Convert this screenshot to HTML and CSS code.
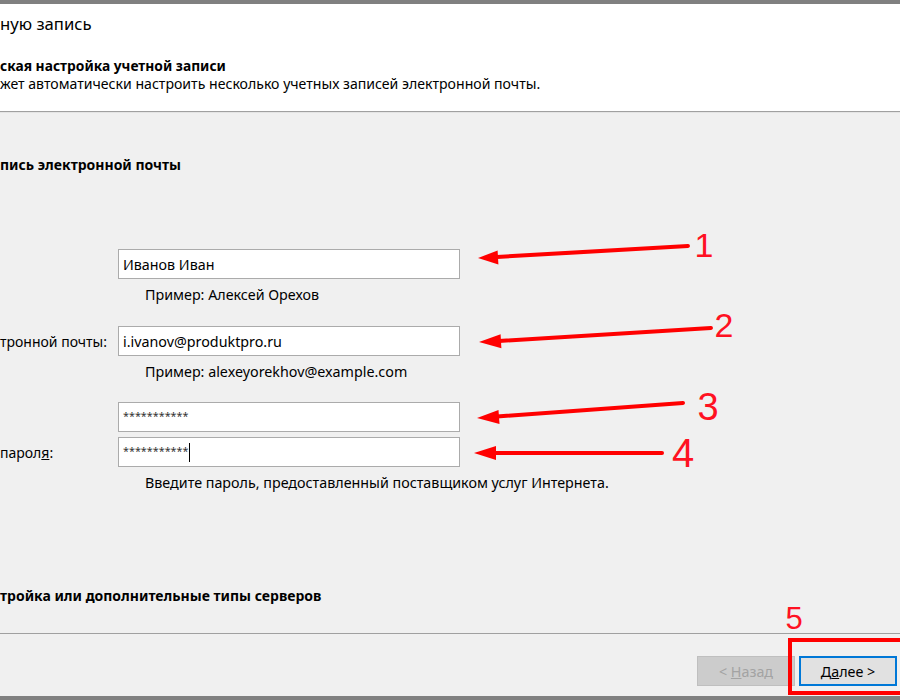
FILE: index.html
```html
<!DOCTYPE html>
<html lang="ru">

<head>
  <meta charset="UTF-8">
  <meta name="viewport" content="width=device-width, initial-scale=1">
  <title>Добавить учетную запись</title>
  <link rel="stylesheet" href="styles.css">
</head>

<body>
  <div class="topbar"></div>
  <div class="dialog">
    <div class="head">
      <div class="head-title">ную запись</div>
      <div class="head-section">ская настройка учетной записи</div>
      <div class="head-desc">жет автоматически настроить несколько учетных записей электронной почты.</div>
    </div>

    <div class="content">
      <div class="group-title">пись электронной почты</div>

      <div class="form">
        <div class="form-row">
          <label class="form-label" for="name"></label>
          <div class="field" id="name">Иванов Иван</div>
        </div>
        <div class="hint">Пример: Алексей Орехов</div>

        <div class="form-row form-row--email">
          <label class="form-label" for="email">тронной почты:</label>
          <div class="field" id="email">i.ivanov@produktpro.ru</div>
        </div>
        <div class="hint">Пример: alexeyorekhov@example.com</div>

        <div class="form-row form-row--pass">
          <label class="form-label" for="pass"></label>
          <div class="field" id="pass"><span class="stars">***********</span></div>
        </div>
        <div class="form-row form-row--repeat">
          <label class="form-label" for="pass2">парол<u>я</u>:</label>
          <div class="field" id="pass2"><span class="stars">***********</span><span class="caret"></span></div>
        </div>
        <div class="hint">Введите пароль, предоставленный поставщиком услуг Интернета.</div>
      </div>

      <div class="group-title group-title--manual">тройка или дополнительные типы серверов</div>
    </div>

    <div class="foot">
      <button class="btn" disabled>&lt; <u>Н</u>азад</button>
      <button class="btn btn--default">Д<u>а</u>лее &gt;</button>
    </div>
  </div>
  <div class="bottombar"></div>

  <!-- пометки поверх скриншота -->
  <svg class="marks" width="900" height="700" viewBox="0 0 900 700">
    <g class="arrow">
      <line x1="688" y1="246" x2="497" y2="257"></line>
      <polygon points="478,258 498.4,264.5 497.6,250.5"></polygon>
    </g>
    <g class="arrow">
      <line x1="711" y1="328" x2="499" y2="341"></line>
      <polygon points="479,342 501.4,348.2 500.6,334.2"></polygon>
    </g>
    <g class="arrow">
      <line x1="683" y1="403" x2="497" y2="416.5"></line>
      <polygon points="477,418 499.5,423.9 498.5,409.9"></polygon>
    </g>
    <g class="arrow">
      <line x1="662" y1="453" x2="494" y2="453"></line>
      <polygon points="474,453 496,460 496,446"></polygon>
    </g>
    <text class="num" x="704" y="257" font-size="34">1</text>
    <text class="num" x="724" y="337" font-size="34">2</text>
    <text class="num" x="708" y="420" font-size="38">3</text>
    <text class="num" x="683" y="467" font-size="40">4</text>
    <text class="num" x="794" y="629" font-size="31">5</text>
    <rect class="frame" x="790" y="640" width="130" height="53"></rect>
  </svg>
</body>

</html>
```

FILE: styles.css
```css
* {
  box-sizing: border-box;
}

body {
  margin: 0;
  width: 900px;
  height: 700px;
  overflow: hidden;
  position: relative;
  background: #f0f0f0;
  color: #000;
  font-family: "Noto Sans", "Open Sans", sans-serif;
  font-size: 14.3px;
}

.topbar,
.bottombar {
  height: 4px;
  background: #808080;
}

/* шапка мастера */
.head {
  height: 108px;
  padding-top: 10px;
  background: #fff;
  border-bottom: 1px solid #a0a0a0;
}
.head-title {
  font-size: 16.7px;
  line-height: 20px;
}
.head-section {
  margin-top: 23px;
  font-size: 13.8px;
  font-weight: bold;
  line-height: 18px;
}
.head-desc {
  font-size: 14.1px;
  line-height: 18px;
}

.content {
  height: 521px;
  padding-top: 42px;
  border-top: 1px solid #e4e4e4;
}
.group-title {
  font-size: 14px;
  font-weight: bold;
  line-height: 20px;
}
.group-title--manual {
  margin-top: 93px;
}

.form {
  margin-top: 74px;
}
.form-row {
  display: flex;
  align-items: center;
}
.form-row--email {
  margin-top: 21px;
}
.form-row--pass {
  margin-top: 20px;
}
.form-row--repeat {
  margin-top: 5px;
}
.form-label {
  width: 118px;
  font-size: 14px;
  white-space: nowrap;
}
.field {
  width: 342px;
  height: 30px;
  padding-left: 4px;
  display: flex;
  align-items: center;
  background: #fff;
  border: 1px solid #ababab;
}
.stars {
  font-size: 10.8px;
  color: #333;
  margin-top: -4px;
}
.caret {
  display: inline-block;
  width: 1px;
  height: 19px;
  margin-left: 1px;
  background: #000;
}
.hint {
  margin: 6px 0 0 145px;
  line-height: 20px;
}

/* кнопки внизу */
.foot {
  height: 63px;
  padding: 22px 3px 0 0;
  display: flex;
  justify-content: flex-end;
  gap: 4px;
  border-top: 1px solid #a0a0a0;
}
.btn {
  width: 98px;
  height: 30px;
  padding: 0;
  font: inherit;
  color: #000;
  background: #e1e1e1;
  border: 1px solid #adadad;
}
.btn:disabled {
  color: #a3a3a3;
  background: #cccccc;
  border-color: #bfbfbf;
}
.btn--default {
  border: 2px solid #0078d7;
}

.marks {
  position: absolute;
  left: 0;
  top: 0;
  pointer-events: none;
}
.arrow line {
  stroke: #ff0000;
  stroke-width: 4;
  stroke-linecap: round;
}
.arrow polygon {
  fill: #ff0000;
}
.num {
  fill: #ff1122;
  font-family: "Liberation Sans", Arial, sans-serif;
  text-anchor: middle;
}
.frame {
  fill: none;
  stroke: #ff0000;
  stroke-width: 4;
}
```
